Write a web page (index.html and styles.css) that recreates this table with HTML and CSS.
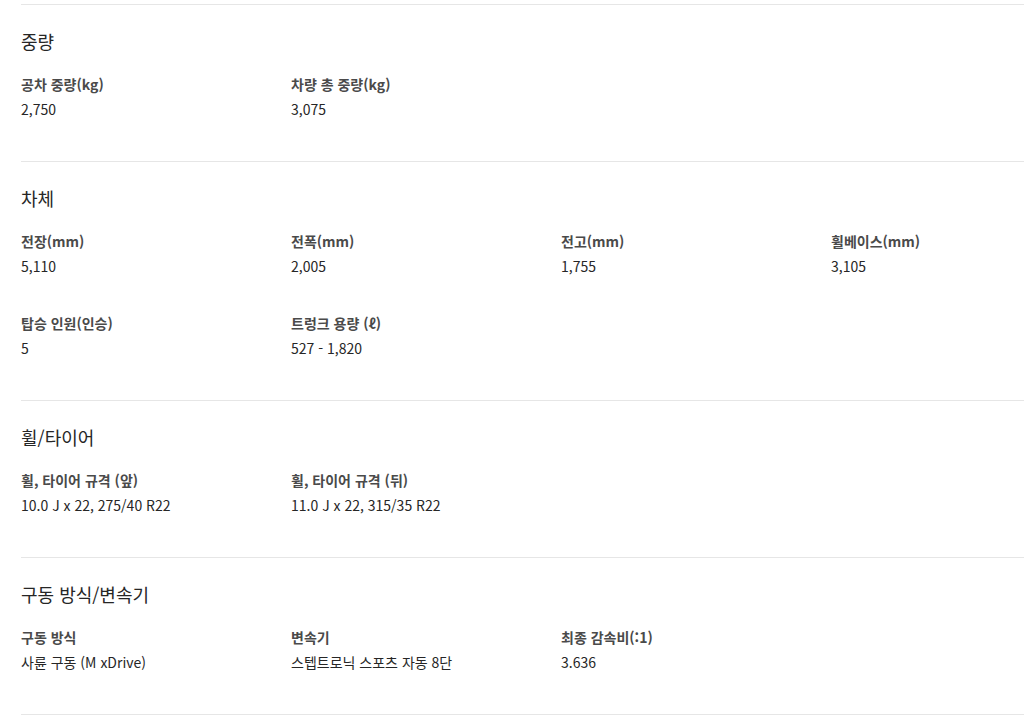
FILE: index.html
```html
<!DOCTYPE html>
<html lang="ko">
<head>
<meta charset="utf-8">
<link rel="stylesheet" href="styles.css">
</head>
<body>
<div class="specs">
  <section class="group">
    <h2 class="title">중량</h2>
    <div class="grid">
      <div class="item"><div class="label">공차 중량(kg)</div><div class="value">2,750</div></div>
      <div class="item"><div class="label">차량 총 중량(kg)</div><div class="value">3,075</div></div>
    </div>
  </section>
  <section class="group">
    <h2 class="title">차체</h2>
    <div class="grid">
      <div class="item"><div class="label">전장(mm)</div><div class="value">5,110</div></div>
      <div class="item"><div class="label">전폭(mm)</div><div class="value">2,005</div></div>
      <div class="item"><div class="label">전고(mm)</div><div class="value">1,755</div></div>
      <div class="item"><div class="label">휠베이스(mm)</div><div class="value">3,105</div></div>
      <div class="item"><div class="label">탑승 인원(인승)</div><div class="value">5</div></div>
      <div class="item"><div class="label">트렁크 용량 (ℓ)</div><div class="value">527 - 1,820</div></div>
    </div>
  </section>
  <section class="group">
    <h2 class="title">휠/타이어</h2>
    <div class="grid">
      <div class="item"><div class="label">휠, 타이어 규격 (앞)</div><div class="value">10.0 J x 22, 275/40 R22</div></div>
      <div class="item"><div class="label">휠, 타이어 규격 (뒤)</div><div class="value">11.0 J x 22, 315/35 R22</div></div>
    </div>
  </section>
  <section class="group">
    <h2 class="title">구동 방식/변속기</h2>
    <div class="grid">
      <div class="item"><div class="label">구동 방식</div><div class="value">사륜 구동 (M xDrive)</div></div>
      <div class="item"><div class="label">변속기</div><div class="value">스텝트로닉 스포츠 자동 8단</div></div>
      <div class="item"><div class="label">최종 감속비(:1)</div><div class="value">3.636</div></div>
    </div>
  </section>
</div>
</body>
</html>
```

FILE: styles.css
```css
html, body {
  margin: 0;
  padding: 0;
  background: #ffffff;
}
body {
  font-family: "Noto Sans CJK KR", "Noto Sans", sans-serif;
  color: #262626;
  overflow: hidden;
}
.specs {
  padding: 4px 0 0 21px;
}
.group {
  border-top: 1px solid #e6e6e6;
  padding: 24px 0 42px;
}
.group:last-child {
  border-bottom: 1px solid #e6e6e6;
}
.title {
  margin: 0;
  font-size: 18px;
  font-weight: 400;
  line-height: 24px;
  color: #262626;
}
.grid {
  display: grid;
  grid-template-columns: repeat(3, 270px) 1fr;
  row-gap: 37px;
  margin-top: 21px;
}
.item {
  display: flex;
  flex-direction: column;
  gap: 5px;
}
.label {
  font-size: 14px;
  font-weight: 700;
  line-height: 20px;
  color: #4a4a4a;
}
.value {
  font-size: 14px;
  font-weight: 400;
  line-height: 20px;
  color: #262626;
}
```
